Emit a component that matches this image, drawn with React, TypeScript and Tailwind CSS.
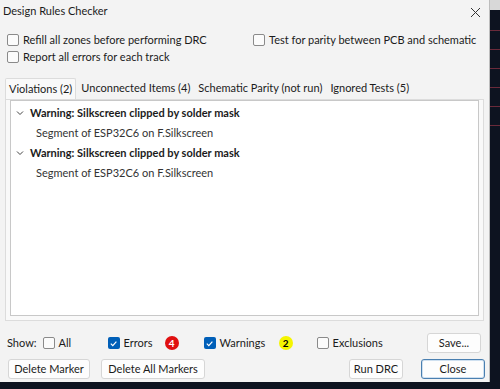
import { useState } from "react"

const font = { fontFamily: 'Lato, "Noto Sans", sans-serif' }

interface CheckProps {
  label: string
  checked?: boolean
}

const Check = ({ label, checked }: CheckProps) => (
  <div className="h-[16px] flex items-center gap-[4px] whitespace-nowrap">
    {checked ? (
      <div className="w-[12px] h-[12px] rounded-[2px] bg-[#005fb8] flex items-center justify-center shrink-0">
        <svg width="9" height="9" viewBox="0 0 10 10">
          <path d="M2 5.2 L4.2 7.3 L8.2 2.8" stroke="white" strokeWidth="1.3" fill="none" />
        </svg>
      </div>
    ) : (
      <div className="w-[12px] h-[12px] rounded-[2px] border border-[#8a8a8a] bg-[#fbfbfb] shrink-0" />
    )}
    <span>{label}</span>
  </div>
)

const Badge = ({ n, className }: { n: number; className: string }) => (
  <div className={"w-[14px] h-[14px] rounded-full flex items-center justify-center text-[10px] font-bold leading-none " + className}>
    {n}
  </div>
)

const Button = ({ label, focused }: { label: string; focused?: boolean }) => (
  <div
    className={
      "h-[20px] flex items-center justify-center rounded-[3px] bg-[#fdfdfd] whitespace-nowrap " +
      (focused ? "border border-[#4a7fb0] shadow-[inset_0_0_0_1px_#cfe0f0]" : "border border-[#d6d6d6]")
    }
  >
    {label}
  </div>
)

const violations = [
  { title: "Warning: Silkscreen clipped by solder mask", detail: "Segment of ESP32C6 on F.Silkscreen" },
  { title: "Warning: Silkscreen clipped by solder mask", detail: "Segment of ESP32C6 on F.Silkscreen" },
]

const tabs = ["Violations (2)", "Unconnected Items (4)", "Schematic Parity (not run)", "Ignored Tests (5)"]

export default function App() {
  const [active] = useState(0)
  return (
    <div className="w-[500px] h-[389px] bg-[#0d1320] flex text-[11px] text-[#1b1b1b] overflow-hidden" style={font}>
      <div className="w-[490px] h-[382px] bg-[#f3f3f3] flex flex-col border-r border-[#bdbdbd] shrink-0">
        <div className="h-[22px] flex items-center justify-between pl-[3px] pr-[6px] text-[11px]">
          <span>Design Rules Checker</span>
          <svg width="11" height="11" viewBox="0 0 11 11" className="mr-[2px] mt-[2px]">
            <path d="M1 1 L10 10 M10 1 L1 10" stroke="#333" strokeWidth="1" />
          </svg>
        </div>
        <div className="flex pl-[7px] mt-[10px]">
          <div className="w-[246px] flex flex-col gap-[1px]">
            <Check label="Refill all zones before performing DRC" />
            <Check label="Report all errors for each track" />
          </div>
          <div>
            <Check label="Test for parity between PCB and schematic" />
          </div>
        </div>
        <div className="flex mt-[13px] pl-[5px] h-[21px] items-end whitespace-nowrap">
          {tabs.map((t, i) => (
            <div
              key={t}
              className={
                "px-[3px] " +
                (i === active
                  ? "h-[21px] pt-[2px] bg-[#f9f9f9] border border-b-0 border-[#dcdcdc] rounded-t-[2px] mr-[2px]"
                  : "h-[19px] mr-[2px]")
              }
            >
              {t}
            </div>
          ))}
        </div>
        <div className="mx-[5px] h-[222px] bg-[#f9f9f9] border border-[#dcdcdc] px-[4px] pt-0 pb-[4px]">
          <div className="h-full bg-white border border-[#c8c8c8] pt-[2px]">
            {violations.map((v, i) => (
              <div key={i}>
                <div className="h-[20px] flex items-center pl-[5px] gap-[6px]">
                  <svg width="8" height="8" viewBox="0 0 8 8">
                    <path d="M1 2.5 L4 5.5 L7 2.5" stroke="#444" strokeWidth="1" fill="none" />
                  </svg>
                  <span className="font-bold">{v.title}</span>
                </div>
                <div className="h-[20px] flex items-center pl-[25px] text-[#333]">{v.detail}</div>
              </div>
            ))}
          </div>
        </div>
        <div className="flex items-center mt-[12px] pl-[7px] pr-[8px] h-[20px]">
          <span className="mr-[6px]">Show:</span>
          <div className="w-[65px]">
            <Check label="All" />
          </div>
          <div className="w-[57px]">
            <Check label="Errors" checked />
          </div>
          <div className="w-[39px]">
            <Badge n={4} className="bg-[#e01010] text-white" />
          </div>
          <div className="w-[75px]">
            <Check label="Warnings" checked />
          </div>
          <div className="w-[38px]">
            <Badge n={2} className="bg-[#f5f500] text-black" />
          </div>
          <Check label="Exclusions" />
          <div className="ml-auto w-[54px]">
            <Button label="Save..." />
          </div>
        </div>
        <div className="flex items-center mt-[6px] pl-[8px] pr-[4px]">
          <div className="w-[82px]">
            <Button label="Delete Marker" />
          </div>
          <div className="w-[104px] ml-[11px]">
            <Button label="Delete All Markers" />
          </div>
          <div className="w-[54px] ml-auto">
            <Button label="Run DRC" />
          </div>
          <div className="w-[64px] ml-[18px]">
            <Button label="Close" focused />
          </div>
        </div>
      </div>
      <div className="flex-1 flex flex-col">
        <div className="h-[10px] bg-[#d8d8d8]" />
        <div className="flex-1 flex flex-col gap-[18px] pt-[20px]">
          <div className="h-px bg-[#6a2a3a]" />
          <div className="h-px bg-[#6a2a3a]" />
          <div className="h-px bg-[#6a2a3a]" />
          <div className="h-px bg-[#6a2a3a]" />
          <div className="h-px bg-[#6a2a3a]" />
          <div className="h-px bg-[#6a2a3a]" />
        </div>
      </div>
    </div>
  )
}
